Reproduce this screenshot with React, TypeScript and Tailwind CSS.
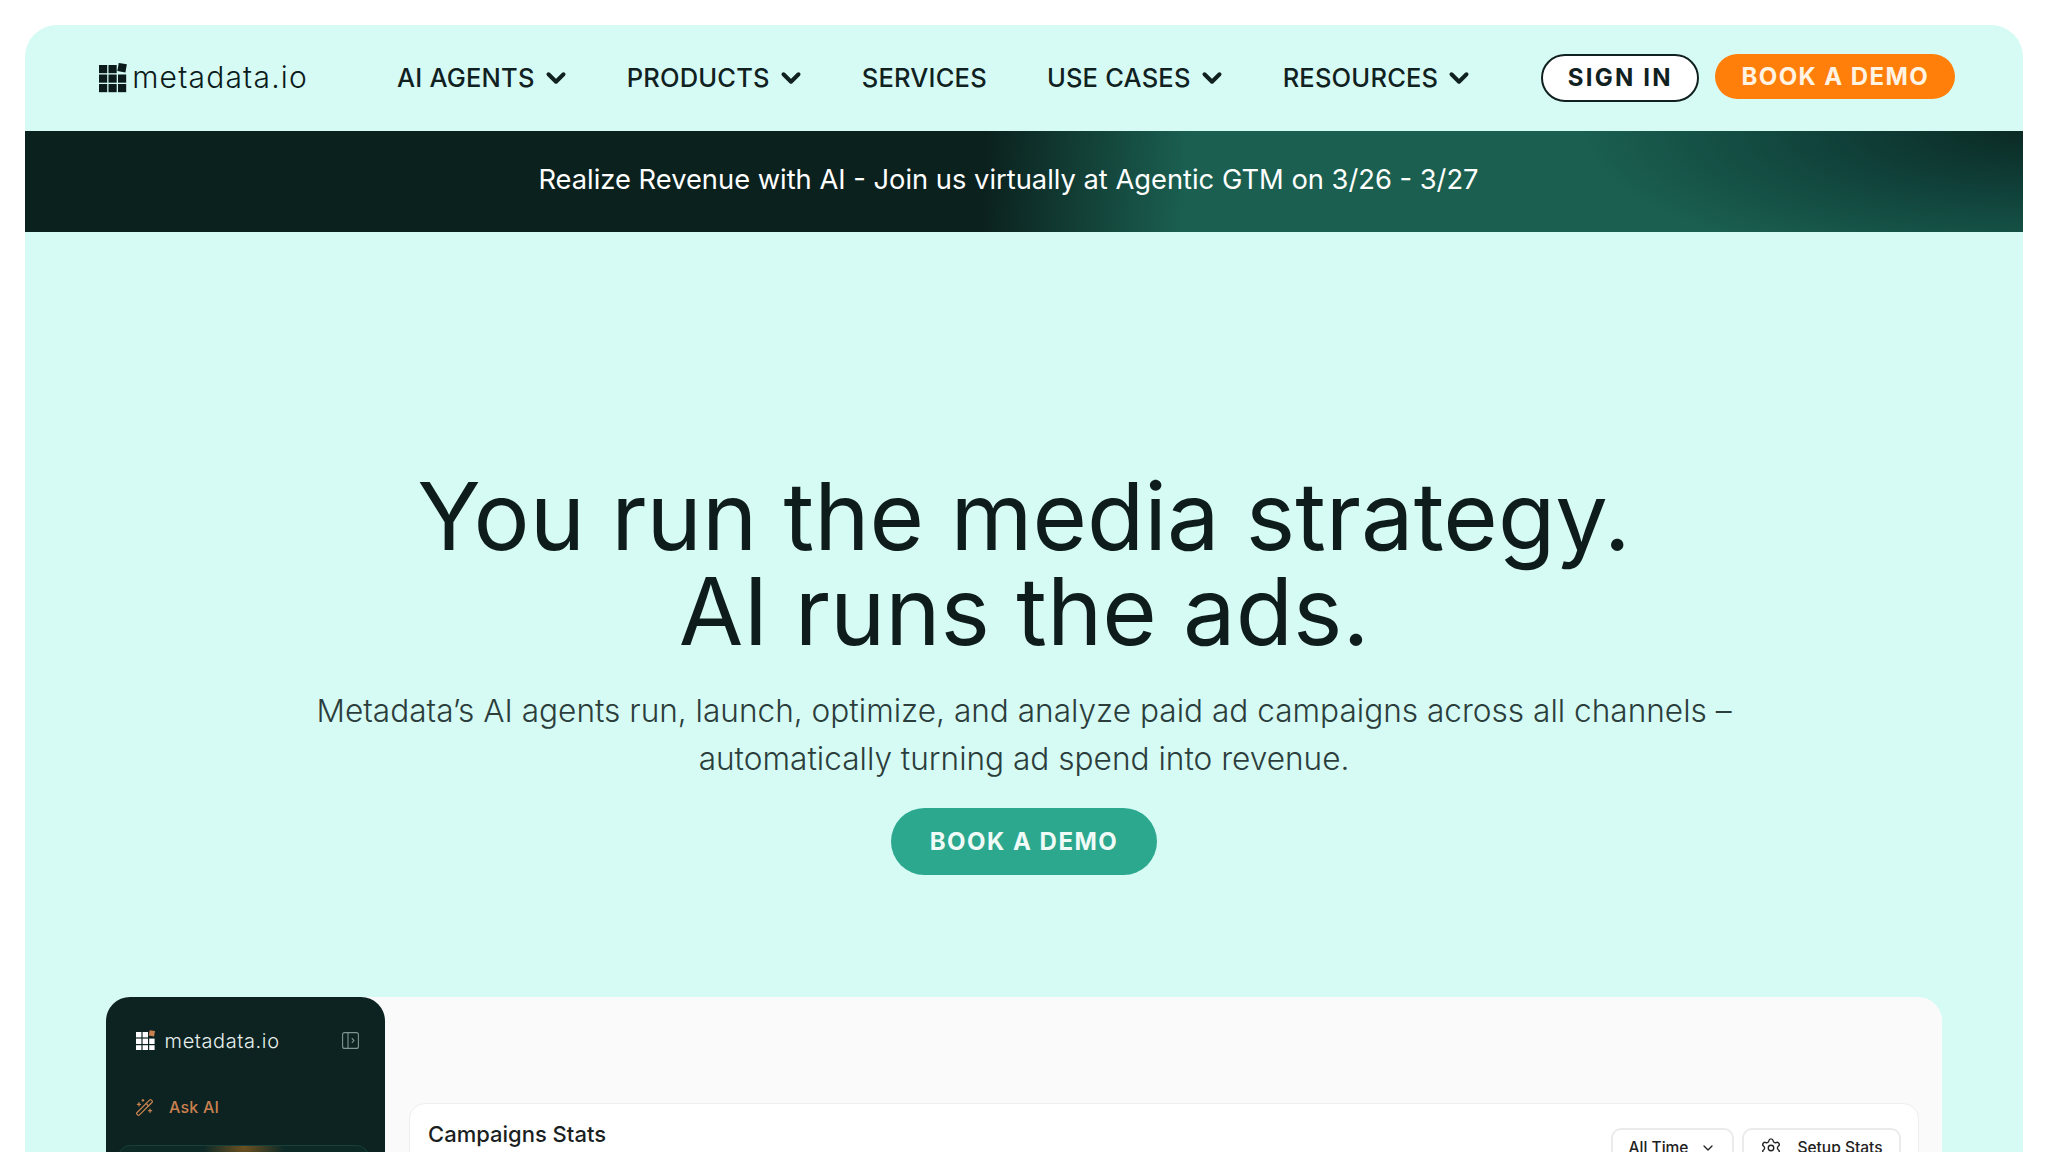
import { ChevronDown, Settings, WandSparkles } from "lucide-react";

function Logo({ dark }: { dark?: boolean }) {
  const fill = dark ? "#ffffff" : "#0b1a1a";
  const accent = dark ? "#c9804f" : "#0b1a1a";
  const s = dark ? 5.4 : 8.2;
  const g = dark ? 1.2 : 1.3;
  const cells = [0, 1, 2].flatMap((r) => [0, 1, 2].map((c) => [c, r]));
  const size = s * 3 + g * 2 + 2;
  return (
    <svg width={size} height={size} viewBox={`0 0 ${size} ${size}`} className="shrink-0">
      {cells.map(([c, r]) =>
        c === 2 && r === 0 ? (
          <rect
            key="accent"
            x={c * (s + g)}
            y={0.6}
            width={s}
            height={s}
            fill={accent}
            transform={`rotate(10 ${c * (s + g) + s / 2} ${s / 2 + 0.6})`}
          />
        ) : (
          <rect key={`${c}-${r}`} x={c * (s + g)} y={r * (s + g) + 2} width={s} height={s} fill={fill} />
        )
      )}
    </svg>
  );
}

function NavItem({ label, chevron = true }: { label: string; chevron?: boolean }) {
  return (
    <a className="flex items-center gap-[10px] text-[25.5px] font-medium tracking-[0.2px] text-[#10211f]">
      {label}
      {chevron && <ChevronDown className="h-[30px] w-[30px] -mx-[4px]" strokeWidth={3.2} />}
    </a>
  );
}

export default function App() {
  return (
    <div className="h-screen overflow-hidden bg-white px-[25px] pt-[25px] font-['Inter',sans-serif] text-[#10211f]">
      <main className="h-[1200px] overflow-hidden rounded-t-[32px] bg-[#d6fbf4]">
        <header className="flex h-[106px] items-center pl-[74px]">
          <div className="flex w-[298px] items-center gap-[4px]">
            <Logo />
            <span className="pb-[3px] text-[30px] leading-none font-light tracking-[1.2px] text-[#0b1a1a]">metadata.io</span>
          </div>
          <nav className="flex items-center gap-[60px]">
            <NavItem label="AI AGENTS" />
            <NavItem label="PRODUCTS" />
            <NavItem label="SERVICES" chevron={false} />
            <NavItem label="USE CASES" />
            <NavItem label="RESOURCES" />
          </nav>
          <div className="ml-[71px] flex items-start gap-[16px]">
            <button className="flex h-[48px] w-[158px] items-center justify-center rounded-full border-2 border-[#10211f] bg-white text-[24px] font-bold tracking-[2.2px]">
              SIGN IN
            </button>
            <button className="flex h-[45px] w-[240px] items-center justify-center rounded-full bg-[#ff7f0a] text-[24px] font-bold tracking-[1.4px] text-[#fff3e4]">
              BOOK A DEMO
            </button>
          </div>
        </header>

        <div className="relative flex h-[101px] items-center justify-center overflow-hidden bg-[linear-gradient(93deg,#0b211e_0%,#0b211e_48%,#1a5f50_58%,#1a5f50_100%)] pr-[31px]">
          <div className="absolute inset-0 bg-[radial-gradient(ellipse_440px_140px_at_100%_0%,#0b2a25_0%,#10423a_45%,transparent_100%)]" />
          <span className="relative pb-[3px] text-[27.3px] text-white">
            Realize Revenue with AI - Join us virtually at Agentic GTM on 3/26 - 3/27
          </span>
        </div>

        <section className="flex flex-col items-center pt-[237px]">
          <h1 className="text-center text-[93.6px] leading-[95px] font-normal text-[#0e1c1c]">
            You run the media strategy.
            <br />
            AI runs the ads.
          </h1>
          <p className="mt-[28px] text-center text-[31.6px] leading-[48px] font-light text-[#2c3e3c]">
            Metadata’s AI agents run, launch, optimize, and analyze paid ad campaigns across all channels –
            <br />
            automatically turning ad spend into revenue.
          </p>
          <button className="mt-[25px] flex h-[67px] w-[266px] items-center justify-center rounded-full bg-[#2ca88e] text-[24px] font-bold tracking-[1.5px] text-[#f0fbf8]">
            BOOK A DEMO
          </button>
        </section>

        <section className="mx-[81px] mt-[122px] flex h-[400px] rounded-[24px] bg-[#fafafa]">
          <aside className="h-full w-[279px] shrink-0 rounded-[24px] bg-[#0c2321] pl-[12px] pr-[16px]">
            <div className="flex items-center justify-between pt-[32px] pl-[18px] pr-[10px]">
              <div className="flex items-center gap-[8px]">
                <Logo dark />
                <span className="pt-[2px] text-[20px] leading-none font-light tracking-[0.6px] text-[#e6efed]">metadata.io</span>
              </div>
              <svg width="17" height="17" viewBox="0 0 17 17" fill="none" stroke="#7f9591" strokeWidth="1.1">
                <rect x="0.6" y="0.6" width="15.8" height="15.8" rx="2" />
                <path d="M6 0.6V16.4" />
                <path d="M9.8 6.2l2.2 2.3-2.2 2.3" />
              </svg>
            </div>
            <div className="mt-[44px] flex items-center gap-[15px] pl-[17px] text-[16px] font-medium text-[#c9804f]">
              <WandSparkles className="h-[19px] w-[19px]" strokeWidth={1.6} />
              <span className="tracking-[0.2px]">Ask AI</span>
            </div>
            <div className="relative mt-[26px] h-[200px] overflow-hidden rounded-[12px] border border-[#17403a] bg-[#0e2a27]">
              <div className="absolute left-1/2 top-[-40px] h-[80px] w-[80px] -translate-x-1/2 rounded-full bg-[radial-gradient(circle,#6e5220_0%,transparent_70%)]" />
            </div>
          </aside>
          <div className="flex-1 pl-[24px] pr-[23px] pt-[106px]">
            <div className="flex h-[300px] items-start justify-between rounded-[16px] border border-[#eeeeee] bg-white pl-[18px] pr-[17px] pt-[24px]">
              <h2 className="-mt-[2px] text-[22px] leading-[16px] font-medium text-[#1b1f1f]">Campaigns Stats</h2>
              <div className="flex gap-[8px]">
                <button className="flex h-[40px] w-[123px] items-center justify-center gap-[12px] rounded-[10px] border-2 border-[#ebebeb] text-[15.5px] font-medium text-[#222]">
                  All Time
                  <ChevronDown className="h-[16px] w-[16px]" strokeWidth={2} />
                </button>
                <button className="flex h-[40px] w-[159px] items-center justify-center gap-[15px] rounded-[10px] border-2 border-[#ebebeb] text-[15.5px] font-medium text-[#222]">
                  <Settings className="h-[22px] w-[22px]" strokeWidth={1.5} />
                  Setup Stats
                </button>
              </div>
            </div>
          </div>
        </section>
      </main>
    </div>
  );
}
